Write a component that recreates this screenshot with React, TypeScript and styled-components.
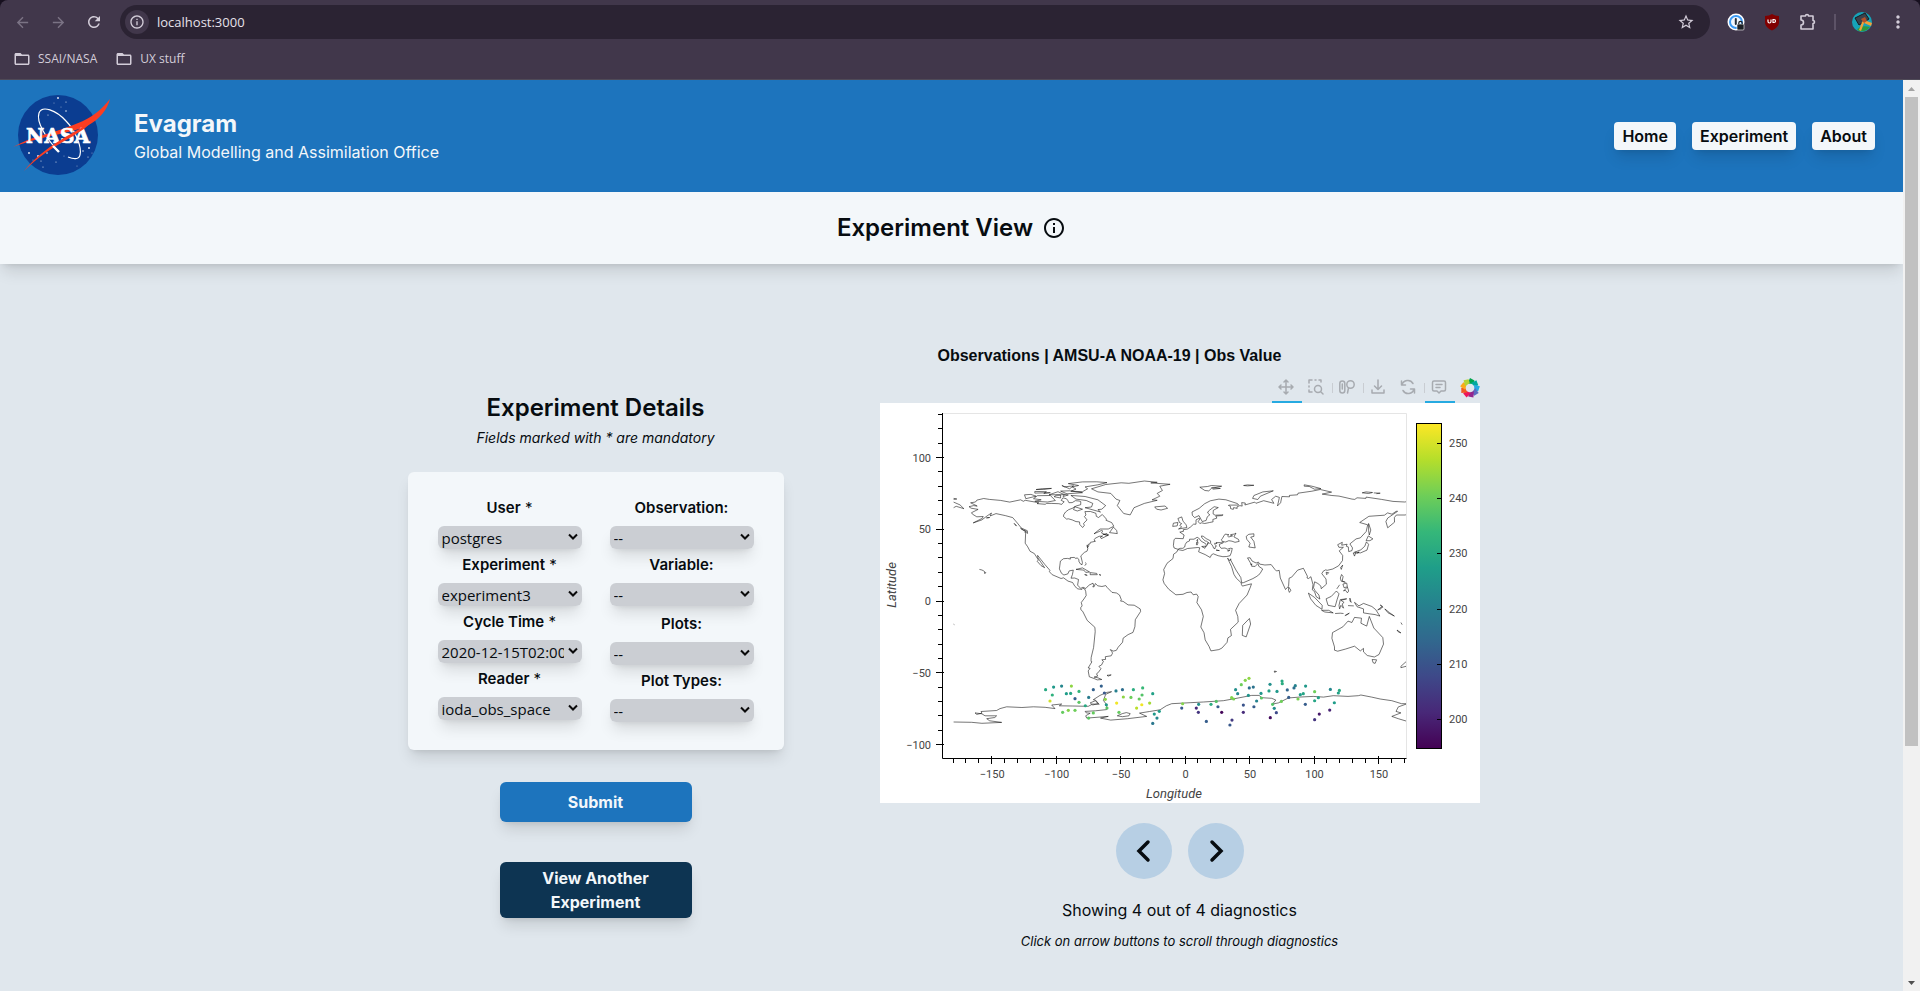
import React from "react";
import styled, { createGlobalStyle } from "styled-components";
import {
  MdArrowBack,
  MdArrowForward,
  MdRefresh,
  MdInfoOutline,
  MdStarBorder,
  MdFolderOpen,
  MdMoreVert,
} from "react-icons/md";

const color = {
  chrome: "#41374b",
  chromeDark: "#2b2333",
  chromeText: "#d3cdd9",
  blue: "#1d74bd",
  navy: "#0d3452",
  paper: "#f3f7fa",
  page: "#e0e7ed",
  ink: "#070c10",
  field: "#cbced3",
  pale: "#b7cfe4",
  toolIcon: "#a7abb0",
  toolActive: "#26aae1",
};

const uiFont = `"Open Sans", "Noto Sans", sans-serif`;
const shadow = "0 10px 15px -3px rgba(0,0,0,0.12), 0 4px 6px -4px rgba(0,0,0,0.12)";

const GlobalStyle = createGlobalStyle`
  *, *::before, *::after { box-sizing: border-box; }
  body {
    margin: 0;
    background: ${color.page};
    color: ${color.ink};
    font-family: Inter, "Liberation Sans", sans-serif;
    font-size: 16px;
    line-height: 24px;
  }
  h1, h2, p { margin: 0; }
  button { font: inherit; color: inherit; border: 0; padding: 0; background: none; cursor: pointer; }
`;

/* ---------- browser window ---------- */

const Window = styled.div`
  display: flex;
  flex-direction: column;
  height: 100vh;
  background: #17101f;
`;

const Chrome = styled.header`
  flex: none;
  background: ${color.chrome};
  border-bottom: 1px solid #4f4a57;
  border-radius: 8px 8px 0 0;
  font-family: ${uiFont};
  font-size: 12px;
  color: ${color.chromeText};
`;

const ChromeRow = styled.div`
  display: flex;
  align-items: center;
  height: 44px;
  padding: 0 12px;
  gap: 16px;
`;

const ChromeButton = styled.button<{ $dim?: boolean }>`
  display: flex;
  align-items: center;
  justify-content: center;
  width: 20px;
  height: 20px;
  color: ${(p) => (p.$dim ? "#7b7385" : color.chromeText)};
`;

const NavButtons = styled.div`
  display: flex;
  gap: 16px;
`;

const AddressBar = styled.div`
  flex: 1;
  display: flex;
  align-items: center;
  gap: 8px;
  height: 34px;
  padding: 0 14px 0 5px;
  border-radius: 17px;
  background: ${color.chromeDark};
`;

const SiteInfo = styled.button`
  display: flex;
  align-items: center;
  justify-content: center;
  width: 24px;
  height: 24px;
  border-radius: 12px;
  background: ${color.chrome};
  color: ${color.chromeText};
`;

const AddressInput = styled.input`
  flex: 1;
  border: 0;
  padding: 0;
  background: none;
  outline: none;
  color: #e6e1ea;
  font: 13px ${uiFont};
`;

const Extensions = styled.div`
  display: flex;
  align-items: center;
  gap: 16px;
`;

const Divider = styled.span`
  width: 2px;
  height: 16px;
  background: #5d5367;
`;

const Bookmarks = styled.nav`
  display: flex;
  align-items: center;
  gap: 18px;
  height: 35px;
  padding: 0 13px 5px;
`;

const Bookmark = styled.a`
  display: flex;
  align-items: center;
  gap: 7px;
  color: ${color.chromeText};
  text-decoration: none;
`;

const Viewport = styled.div`
  flex: 1;
  display: flex;
  min-height: 0;
  background: ${color.page};
`;

const Page = styled.div`
  flex: 1;
  min-width: 0;
  overflow: hidden;
`;

const ScrollTrack = styled.div`
  flex: none;
  display: flex;
  flex-direction: column;
  justify-content: space-between;
  align-items: center;
  width: 17px;
  background: #f1f1f1;
`;

const ScrollThumb = styled.div`
  flex: 0.74 1 0;
  width: 13px;
  background: #c1c1c1;
`;

const ScrollSpace = styled.div`
  flex: 0.26 1 0;
`;

/* ---------- site ---------- */

const SiteHeader = styled.header`
  display: flex;
  align-items: center;
  justify-content: space-between;
  height: 112px;
  padding: 0 28px 0 12px;
  background: ${color.blue};
`;

const Brand = styled.div`
  display: flex;
  align-items: center;
  gap: 22px;
  color: ${color.paper};
`;

const BrandName = styled.p`
  font-size: 24px;
  line-height: 32px;
  font-weight: 700;
`;

const SiteNav = styled.nav`
  display: flex;
  gap: 16px;
`;

const NavLink = styled.a`
  padding: 2px 8px;
  border-radius: 4px;
  background: ${color.paper};
  color: ${color.ink};
  font-weight: 600;
  text-decoration: none;
  box-shadow: ${shadow};
`;

const TitleBar = styled.div`
  display: flex;
  align-items: center;
  justify-content: center;
  gap: 9px;
  height: 72px;
  background: ${color.paper};
  box-shadow: ${shadow};
`;

const Heading = styled.h1`
  font-size: 24px;
  line-height: 32px;
  font-weight: 600;
`;

const Note = styled.p<{ $small?: boolean }>`
  font-size: ${(p) => (p.$small ? 13 : 14)}px;
  line-height: 20px;
  font-style: italic;
`;

const Main = styled.main`
  display: grid;
  grid-template-columns: 376px 616px;
  gap: 96px;
  justify-content: center;
  align-items: start;
  padding: 80px 16px 40px;
`;

const Details = styled.form`
  display: flex;
  flex-direction: column;
  align-items: center;
  padding-top: 48px;
  gap: 4px;
`;

const Card = styled.div`
  display: grid;
  grid-template-columns: 144px 144px;
  justify-content: center;
  column-gap: 28px;
  width: 100%;
  margin: 20px 0 28px;
  padding: 24px 16px 28px;
  border-radius: 6px;
  background: ${color.paper};
  box-shadow: ${shadow};
`;

const FieldColumn = styled.div`
  display: flex;
  flex-direction: column;
  gap: 4px;
`;

const FieldGroup = styled.div`
  display: flex;
  flex-direction: column;
  gap: 4px;
  & + & {
    margin-top: 2px;
  }
`;

const Field = styled.div`
  display: flex;
  flex-direction: column;
  gap: 6px;
`;

const Label = styled.label`
  text-align: center;
  font-size: 15px;
  font-weight: 600;
`;

const Mandatory = styled.span`
  font-weight: 400;
`;

const SelectShell = styled.div`
  position: relative;
  height: 23px;
  border-radius: 6px;
  box-shadow: ${shadow};
`;

const Select = styled.select`
  appearance: none;
  display: block;
  width: 100%;
  height: 23px;
  padding: 2px 18px 0 4px;
  border: 0;
  border-radius: 6px;
  background: ${color.field};
  color: ${color.ink};
  font: 15px/21px ${uiFont};
`;

const SelectArrow = styled.svg`
  position: absolute;
  right: 4px;
  top: 7px;
  pointer-events: none;
`;

const ActionButton = styled.button<{ $tone: string }>`
  width: 192px;
  min-height: 40px;
  padding: 4px 24px;
  border-radius: 6px;
  background: ${(p) => p.$tone};
  color: ${color.paper};
  font-weight: 700;
  box-shadow: ${shadow};
  & + & {
    margin-top: 36px;
  }
`;

const Diagnostics = styled.section`
  display: flex;
  flex-direction: column;
  align-items: center;
  padding-right: 16px;
`;

const PlotTitle = styled.h2`
  align-self: flex-start;
  padding-left: 58px;
  font: 700 16px/24px "Liberation Sans", Arial, sans-serif;
`;

const PlotTools = styled.div`
  align-self: flex-end;
  display: flex;
  align-items: center;
  height: 31px;
  margin-top: 4px;
`;

const ToolButton = styled.button<{ $active?: boolean }>`
  display: flex;
  align-items: center;
  justify-content: center;
  width: 30px;
  height: 31px;
  padding-right: 2px;
  border-bottom: 2px solid ${(p) => (p.$active ? color.toolActive : "transparent")};
`;

const ToolDivider = styled.span`
  width: 1px;
  height: 10px;
  background: #c9cdd2;
`;

const PlotLogo = styled.a`
  display: flex;
  margin-left: 5px;
`;

const ArrowRow = styled.div`
  display: flex;
  gap: 16px;
  margin: 20px 0 19px;
`;

const ArrowButton = styled.button`
  display: flex;
  align-items: center;
  justify-content: center;
  width: 56px;
  height: 56px;
  border-radius: 28px;
  background: ${color.pale};
`;

const Status = styled.p`
  margin-bottom: 9px;
`;

/* ---------- drawings ---------- */

const STARS = [
  [46, 6], [42, 11], [54, 10], [54, 19], [36, 23], [49, 15], [17, 61], [21, 68], [29, 69], [35, 61], [31, 75],
  [65, 74], [77, 56], [80, 61], [76, 65], [71, 59], [44, 70], [78, 49], [26, 64], [52, 64],
];

const NasaLogo = () => (
  <svg width="100" height="84" viewBox="0 2 100 84" role="img" aria-label="NASA">
    <circle cx="46" cy="43" r="40" fill="#0b3d91" />
    {STARS.map(([x, y], i) => (
      <circle key={i} cx={x} cy={y} r={i % 3 ? 0.6 : 1} fill="#fff" opacity={i % 2 ? 0.5 : 0.85} />
    ))}
    <path
      d="M46 59C34 46 24 30 27 21c3-8 17-3 27 8 10 10 16 27 14 34-1 5-7 4-12 2"
      fill="none"
      stroke="#fff"
      strokeWidth="1.2"
    />
    <path d="M1 55C12 49 22 45 31 43C48 38 60 34 71 29C83 23 90 17 98 7C95 18 88 27 75 34C60 41 30 44 1 55Z" fill="#fc3d21" />
    <text x="46" y="51" textAnchor="middle" fontFamily="DejaVu Serif, serif" fontWeight="700" fontSize="20" fill="#fff" stroke="#fff" strokeWidth="0.7">
      NASA
    </text>
    <path d="M12 79C25 63 40 53 55 44C68 37 76 32 84 24C78 34 68 40 56 47C40 56 27 64 12 79Z" fill="#fc3d21" />
    <path d="m41 54 6 6" stroke="#fff" strokeWidth="2.4" />
  </svg>
);

const PuzzleIcon = () => (
  <svg width="18" height="18" viewBox="0 0 18 18" fill="none" stroke="currentColor" strokeWidth="1.6" strokeLinejoin="round">
    <path d="M2 3h4.500a1.500 1.500 0 0 1 3 0H14v4.500a1.500 1.500 0 0 1 0 3V16H2v-4a2 2 0 0 0 0-5Z" />
  </svg>
);

const PasswordIcon = () => (
  <svg width="18" height="18" viewBox="0 0 18 18">
    <circle cx="9" cy="9" r="8.500" fill="#fff" />
    <circle cx="9" cy="9" r="6" fill="#f2f8ff" stroke="#3b9bf5" strokeWidth="2" />
    <rect x="7.8" y="5" width="2" height="7" rx="1" fill="#23303d" />
    <rect x="10" y="11" width="7" height="6" rx="1" fill="#1d2126" stroke="#fff" strokeWidth="0.6" />
    <path d="M11.8 11v-1a1.7 1.7 0 0 1 3.4 0v1" fill="none" stroke="#1d2126" strokeWidth="1.2" />
  </svg>
);

const ShieldIcon = () => (
  <svg width="18" height="18" viewBox="0 0 18 18">
    <path d="M9 1c2 1.3 4.3 2 7 2v6c0 4-3 6.500-7 8.500C5 15.500 2 13 2 9V3c2.700 0 5-.7 7-2Z" fill="#800000" />
    <path d="M5 6.500v2a1.500 1.500 0 0 0 3 0v-2M10 6.500v3h1a1.500 1.500 0 0 0 0-3Z" fill="none" stroke="#fff" strokeWidth="1.2" />
  </svg>
);

const Avatar = () => (
  <svg width="20" height="20" viewBox="0 0 20 20">
    <circle cx="10" cy="10" r="10" fill="#16a3b8" />
    <path d="M5 18c2-3 6-5 13-3a10 10 0 0 1-13 3Z" fill="#2f9a3c" />
    <path d="m3 6 10-5 4 6-10 6Z" fill="#3b424c" stroke="#151b22" />
    <path d="m12 8 8 3-1 3-7-3-3 8-2-1 3-8Z" fill="#f0a23a" />
    <path d="m9 7 4-2 2 4-3 2Z" fill="#b5532a" />
  </svg>
);

const ToolIcon = ({ children }: { children: React.ReactNode }) => (
  <svg width="16" height="16" viewBox="0 0 16 16" fill="none" stroke={color.toolIcon} strokeWidth="1.5" strokeLinecap="round" strokeLinejoin="round">
    {children}
  </svg>
);

const PETALS = ["#00a54f", "#00a99d", "#26aae1", "#5c6bc0", "#92278f", "#ed145b", "#f15a24", "#fba919", "#b5d334"];

const BokehLogo = () => (
  <svg width="20" height="20" viewBox="-10 -10 20 20">
    {PETALS.map((fill, i) => (
      <path key={fill} d="M-2.500 -4.500 0 -10 4.500 -7.500 3 -4Z" fill={fill} transform={`rotate(${i * 40})`} />
    ))}
  </svg>
);

/* Coastlines as longitude, latitude pairs. */
const COASTS = [
  "-168,65.7 -164.5,66.5 -161.7,66.1 -163.7,67.1 -166.8,68.4 -163,69 -161.9,70.3 -156.6,71.4 -152.2,70.8 -143.6,70.1 -136.5,68.9 -128,70.5 -125.8,69.5 -124.4,70.2 -117,69 -113.9,68.4 -115.3,67.9 -108.9,67.4 -107.8,68 -104.3,68 -98.4,67.8 -96.1,67.3 -95.5,68.1 -94.2,69.1 -96.5,70.1 -95.2,71.9 -92.4,71.2 -91.5,70.2 -90.5,68.5 -88,68.6 -85.5,69.9 -82.6,69.7 -81.3,69.2 -81.4,67.1 -84.7,66.3 -87,65.2 -87.3,64.8 -90.8,63.6 -93.2,62 -94.6,60.1 -94.7,58.9 -92.3,57.1 -90.9,57.3 -88,56.5 -85,55.3 -82.3,55.1 -82.1,53.3 -79.9,51.2 -78.6,52.6 -79.1,54.1 -76.5,56.5 -78.5,58.8 -77.3,59.9 -78.1,62.3 -73.8,62.4 -69.6,61.1 -69.3,59 -67.6,58.2 -64.6,60.3 -61.4,57 -61.8,56.3 -57.3,54.6 -55.7,52.1 -60,50.2 -66.4,50.2 -71.1,46.8 -65.1,49.2 -64.2,48.7 -65.1,48.1 -64.8,47 -61.1,45.7 -59.8,45.9 -65.4,43.5 -66.1,44.6 -64.4,45.3 -67.1,45.1 -70.1,43.7 -70.8,42.9 -70.5,41.8 -70,41.6 -73.7,40.9 -74,40.7 -74.2,39.7 -75.5,39.5 -75.1,38.4 -76,37.2 -76.3,39.1 -76.3,37.9 -75.9,36.5 -76.4,34.8 -78.5,33.9 -81.3,31.4 -80.1,26.9 -80.4,25.2 -81.7,25.9 -82.9,27.9 -82.6,28.6 -84,30.1 -85.1,29.6 -86.4,30.4 -89.6,30.2 -89.4,29.2 -91.6,29.7 -94.7,29.5 -97.1,27.8 -97.5,25 -97.9,22.4 -96.3,19.3 -94.4,18.1 -91.4,18.9 -90.3,21 -87.1,21.5 -87.8,18.3 -88.9,15.9 -86,16 -83.1,15 -83.8,11.1 -81.4,8.8 -79.6,9.6 -77.4,8.7 -75.5,10.6 -74.9,11.1 -71.8,12.4 -71.4,11 -72,9.8 -71,9.9 -70,12.2 -68.2,10.6 -64.9,10.1 -61.9,10.7 -60.8,9.4 -57.1,6 -53.6,5.6 -51.3,4.2 -49.9,1 -50.4,-0.1 -48.6,-0.2 -44.6,-2.7 -39.9,-2.9 -35.2,-5.5 -34.9,-7.3 -39,-13 -39.3,-17.9 -40.8,-21.9 -44.6,-23.4 -48.5,-25.9 -48.9,-28.7 -52.3,-32.2 -53.8,-34.4 -56.2,-34.9 -58.4,-33.9 -57.2,-35.3 -56.7,-36.4 -57.7,-38.2 -62.3,-38.8 -62.1,-40.7 -65,-41 -63.8,-42 -65.2,-44.5 -67.3,-45.6 -65.6,-47.2 -67.8,-49.9 -69.1,-50.7 -68.2,-52.3 -71,-53 -68,-53.5 -65,-54.7 -68.6,-55 -71,-54 -74.7,-52.8 -75.6,-48.7 -74.1,-46.9 -75.6,-46.6 -72.7,-42.4 -73.4,-42.1 -73.2,-39.3 -71.4,-32.4 -70.1,-21.4 -70.4,-18.3 -76.3,-13.5 -79.8,-7.2 -81.2,-6.1 -81.4,-4.7 -80.3,-3.4 -80.9,-1 -78.9,1.4 -77.1,3.8 -77.5,6.7 -78.2,8.3 -79.6,8.9 -80.4,8.1 -83.6,8.4 -85.8,10.1 -87.7,12.9 -91.2,13.9 -94.7,16.2 -96.6,15.7 -103.5,18.3 -105.7,20.4 -105.3,21.4 -109.3,25.6 -112.3,29 -114.8,31.8 -114.7,30.2 -109.4,23.2 -112.2,24.7 -115.1,27.7 -114.2,28.6 -117.3,33 -120.6,34.6 -122.5,37.8 -124.4,40.3 -124.1,46.9 -124.7,48.2 -122.6,47.1 -122.8,49 -127.4,50.8 -130.5,54.3 -134.1,58.1 -139.9,59.5 -147.1,60.9 -151.7,59.2 -150.6,61.3 -154,59.3 -158,56.5 -164.8,54.4 -157.7,57.6 -157,58.9 -162,58.7 -165.3,60.5 -166.1,61.5 -161,63.8 -166.4,64.7 -168,65.7",
  "32,31 34.5,31.6 35.5,33.9 36,35.8 36.2,36.6 34.7,36.8 32.5,36.1 30.6,36.9 27.6,36.7 26.3,38.2 26.2,39.5 29.2,40.5 29,41.3 31.1,41.1 33.5,42 36,41.7 38.3,40.9 41.6,41.5 41,43 37.5,44.7 39.1,47.3 37.7,46.6 35,46.3 34.9,45.7 36.5,45.4 35.2,45.1 33.5,44.6 32.5,45.4 33.6,46.2 30.7,46.6 29.6,45.3 28.6,43.7 27.7,42.6 29,41.3 27.2,40.7 23.7,40.7 24.4,40.1 22.6,40.3 22.8,39.3 24,38.2 23.1,37.9 22.8,36.4 21.7,36.8 21.1,38.3 19.4,40.3 19.4,41.9 16,43.5 13.7,45.1 12.3,45.4 12.6,44.1 15.1,41.9 16.2,41.7 18.5,40.2 16.9,40.4 17.1,39 15.7,37.9 16.1,39 15.4,40 12.1,41.7 10.2,43.9 8.9,44.4 6.5,43.1 3.1,43.1 3,41.9 0.8,41 -0.3,39.3 -0.7,37.6 -2.1,36.7 -4.4,36.7 -5.9,36 -8.9,36.9 -9.5,38.7 -9,42.6 -8,43.7 -1.9,43.4 -1.2,46 -4.5,48 -1.6,48.6 -1.9,49.7 1.3,50.1 3.8,51.6 6.1,53.5 8.1,53.5 8.1,56.5 10.6,57.7 10.9,56.5 9.6,55.5 11,54 12.5,54.5 14.8,54 18.6,54.7 21.3,55.2 21.1,56.8 24.3,57.8 23.4,59.2 28,59.5 29.1,60 22.9,59.8 21.3,60.7 21.5,63.2 25.4,65.1 22.2,65.7 17.8,62.7 17.1,61.3 18.8,60.1 16.8,58.7 15.9,56.1 12.9,55.4 10.4,59.5 7,58.1 5.3,59.7 5,62 10.5,64.5 14.8,67.8 19.2,69.8 25.8,71 31.3,70.5 40.3,67.9 41.1,66.8 33.9,66.8 33.2,66.6 34.8,65.9 34.9,64.4 37,63.8 37.2,65.1 40,64.5 39.8,65.6 42.1,66.5 43.9,66.1 43.5,68.6 46.3,68.3 46,66.9 53.7,68.9 54.5,68.1 60.6,69.9 68.5,68.1 66.7,70.7 69.9,73 72.8,72.2 71.3,66.3 73.7,68.4 74.7,72.8 80.6,72.6 80.5,73.6 86.8,74 87.2,75.1 98,76.5 104.4,77.7 113.3,75.9 106,74.5 113.5,73.5 119,73.1 129.1,71 131.3,70.8 133,71.9 139.9,71.5 140,72.4 152,70.8 160.9,69.4 170,69 176,69.9 180,69",
  "180,65 177.4,64.6 179.4,62.7 170.3,59.9 163.5,59.9 162,58.2 162.1,54.9 156.8,51 155.4,55.4 156.8,57.8 164.5,62.5 163.3,62.5 160.1,60.5 156.7,61.4 154.2,59.8 142.2,59 135.1,54.7 141.3,53.1 140.1,48.4 135.5,44 132.3,43.3 127.5,39.8 129.5,37 129.1,35.1 126.5,34.4 126.2,37.7 124.7,38.1 125.3,39.6 121.1,38.9 121.6,40.9 118,39.2 118.9,37.4 122.4,37.4 119.2,34.9 121.9,31.7 121.7,28.2 118.7,24.5 114.2,22.3 109.9,21.4 108.5,21.7 106.7,20.7 105.7,19 108.9,15.3 109.2,11.7 105.2,8.6 105,10.4 102.6,12.2 100.1,13.4 99.2,9.2 100.5,7.2 103.4,4.2 104.2,1.3 101.3,3 100.1,6.5 98.3,7.8 98.8,11.4 97.2,16.9 95.4,15.7 94.2,16 94.5,17.3 91.4,22.8 87,21.5 82.2,16.6 80.3,15.9 79.9,10.4 77.5,8 73.5,16 72.6,21.4 70.5,20.9 69.2,22.1 66.4,25.4 61.5,25.1 57.4,25.7 56.5,27.1 54.7,26.5 51.5,27.9 50.1,30.1 48,30 50.2,26.7 50.8,25 51.3,26 51.3,24.2 54,24.1 56.1,26.1 56.8,24.2 59.8,22.3 57.7,19 55.3,17.2 52.2,15.6 45,12.8 43.5,12.6 42.8,16.4 39.1,21.5 35.2,28.1 35,29.4 34.4,28 32.6,29.9 33.6,27.8 35.7,23.9 37.5,18.6 39.3,15.9 43.1,12.7 43.3,11.5 44.1,10.4 51.1,12 50.3,9.7 47.7,4.2 41.6,-1.7 38.8,-6.5 40.5,-10.8 40.8,-14.7 34.8,-19.8 35.5,-24.1 32.8,-25.7 32.2,-28.8 28.2,-32.8 25.8,-33.9 19.6,-34.8 18.2,-31.7 15.2,-27.1 14.3,-22.1 11.8,-18.1 13.7,-10.7 12.3,-6.1 8.8,-1.1 9.8,3.1 8.5,4.8 5.9,4.3 4.3,6.3 1.1,5.9 -2,4.7 -7.5,4.3 -13.1,8.2 -16.6,12.2 -17.6,14.7 -16.3,19.1 -17,21.9 -14.4,26.3 -9.8,29.6 -9.3,32.6 -6.9,34.1 -5.9,35.8 -2.2,35.2 1.5,36.6 9.5,37.3 11,37.1 10.1,34.3 15.2,32.3 19.1,30.3 20.1,32.2 21.5,32.9 25.2,31.6 28.9,30.9 32,31",
  "-180,-84.3 -166,-84.5 -158,-85.2 -142.7,-84.6 -152,-83.5 -154.3,-82 -148,-81.2 -146.6,-80 -155.6,-80 -158,-78.6 -163.4,-78 -162,-79 -158,-78.2 -158.7,-77 -146.6,-76.3 -144,-75 -138.8,-73.7 -127,-74.2 -118,-73.7 -109,-74.1 -101.3,-75 -103.9,-72.5 -96.1,-71.8 -98,-73 -88,-73.2 -75.5,-73.4 -72.1,-71.8 -67,-72 -70,-69 -71.6,-68.8 -66.4,-65.8 -61.2,-63.7 -57.4,-63.2 -62,-65 -63.8,-69.3 -61.2,-72.3 -61.2,-75.7 -70,-76.5 -78,-76.9 -77,-78 -74,-78.2 -77.5,-80 -76.7,-81.6 -60,-80.4 -66,-81.6 -58.1,-83 -45,-82 -30.2,-80.4 -35.8,-78.1 -28,-77 -19.8,-75.8 -15,-73 -10.8,-71.6 3.5,-70.9 13.8,-70.4 29.3,-69.5 38.3,-68 51.3,-65.8 57,-65.8 59,-67.4 66.8,-67.8 70,-69 67.5,-71.8 72,-71 79.7,-67.6 88,-67 99,-66.5 107,-67 114.6,-66 126,-66.5 134,-66 136,-65.5 144.4,-67 151,-68.3 160,-69.5 167.6,-71.6 172,-71.6 165,-73.8 163.2,-76.9 167,-78 160,-80.4 165,-82 172,-83.9",
  "-53,-80 -49,-78.5 -46,-77.8 -43,-78.5 -44,-80 -49,-80.6 -53,-80",
  "-74,-71 -70,-69.5 -68,-71.5 -72,-72.5 -74,-71",
  "-73,78.2 -68,79.5 -62,81.2 -50,82.4 -44,82 -32,83.6 -22,82.7 -27,82.3 -12,81.3 -20,80 -18,77 -22,75 -20,73 -26,70.5 -22,70.2 -32,68 -40,65 -43,60 -48,61 -53,66.5 -51,70 -54,71 -58,75 -68,76 -73,78.2",
  "-69,83.1 -61,82.5 -68,81 -78,79.5 -76,78.2 -80,76.2 -89,76.5 -85,78 -88,79.5 -83,80.5 -91,81.8 -80,83 -69,83.1",
  "-62,66.5 -68,70.5 -78,72.8 -89,73.6 -85,71 -77,70 -72,68 -73,65.5 -78,65 -66,62 -68,63.7 -65,64 -62,66.5",
  "-115,73.4 -105,73.5 -101,70 -107,69 -117,69.5 -112,70.5 -118,71.3 -115,73.4",
  "-125,74 -120,74.3 -116,73 -124,71.3 -125,74",
  "-100,73.7 -97,73.7 -97,71.8 -102,72.7 -100,73.7",
  "-108,76.2 -110,75 -105,75.5 -117,75.2 -117,76.4 -108,76.2",
  "-90,76.8 -80,75.5 -92,74.7 -97,76.6 -90,76.8",
  "-94,79.5 -87,80.3 -90,78.2 -96,80.5 -94,79.5",
  "-86,65.7 -80,64 -84,62.7 -87,63.7 -86,65.7",
  "-116,77.7 -111,78.3 -104,78.5 -110,77.7 -116,77.7",
  "-95,74.5 -91,73.9 -95,72.8 -94,74.1 -106,74 -99,76.2 -95,74.5",
  "-24,65.6 -22.5,64 -19,63.4 -14,64.6 -16,66.2 -24,65.6",
  "-5.5,50.2 1,51.2 0.5,53 -2,55.7 -3,58.6 -6,57.5 -4.7,54.7 -3,53.9 -4.5,52.8 -3,51.5 -5.5,50.2",
  "-10,52 -6.5,52.3 -6,54.7 -9.5,54.2 -10,52",
  "-59,47.7 -53,47 -53.5,49.2 -56,51.5 -59,47.7",
  "-64,46.5 -61,47 -60,46 -64,46.5",
  "-85,22 -80,23.1 -74.5,20.2 -77.5,19.9 -79,21.5 -85,22",
  "-74,19.8 -69,19.2 -68.5,18.3 -74,18.3 -74,19.8",
  "-78.3,18.4 -76.3,17.9 -78.3,18.4",
  "-67,18.4 -65.7,18 -67,18.4",
  "-78,26.8 -77,26 -78.2,24.6",
  "-128,50.6 -123.5,48.4 -125.5,49 -128,50.6",
  "-133,54.1 -131.2,52.2 -133,54.1",
  "-154.5,57.9 -152,58.2 -154.5,57.9",
  "-160,22 -158,21.6 -157,21.2 -155,19.7 -155.8,19 -156,20.2",
  "-61,-51.8 -57.7,-51.5 -60,-52.3 -61,-51.8",
  "-180,68.9 -175,67 -172,64.3 -178,66 -180,65",
  "-180,71.5 -177.5,71.1 -180,70.8",
  "11,79.3 15,77 18,76.7 20,78.5 28,80 20,80.5 17,79.8 11,79.3",
  "20,79 27,78.5 21,77.9",
  "45,80.5 48,80.9 53,80.6 48,80.2 45,80.5",
  "52,71.5 56,70.7 58,73 68,76.8 60,76 53,73.5 52,71.5",
  "92,81 98,80 105,78.3 100,77.9 96,79.8 92,80 92,81",
  "137,75.4 140,76 145,75.6 142,74.9 137,75.4",
  "146,75.3 151,75.1 148,74.8",
  "49,46.5 53,46.8 53,45 50.5,44.5 53,41.5 54,37 49,37.6 50,40.2 47.5,43 47,45 49,46.5",
  "49.5,-12.2 50.4,-16 47,-25 44,-24 44.3,-17 49.5,-12.2",
  "80,9.7 81.7,7.5 80.5,6 79.8,7.5 80,9.7",
  "95.3,5.5 100,2.5 106,-3 105.8,-5.8 101,-3 97,1.5 95.3,5.5",
  "105.5,-6.5 111,-6.5 114.5,-8.3 108,-7.7 105.5,-6.5",
  "117,7 119,5 117.5,1 116,-4 110.5,-3 109,1.5 113,3.2 117,7",
  "120,1 125,1.5 120.5,0.5 123,-1 121.5,-2 122.5,-5 120.5,-3 119.5,-5.5 119,-3 120,1",
  "131,-1 134.5,-3.4 138,-1.7 144.5,-3.8 147.5,-6 150.7,-10.5 147,-9.5 143,-9 138,-8.3 138,-5.5 133,-4 131,-1",
  "152,-4.2 149,-6.2 151.5,-5.5 152,-4.2",
  "151,-2.8 153,-4.5 152.5,-3.5 151,-2.8",
  "154.5,-5.5 158,-8 162,-10.5 157,-8.2 154.5,-5.5",
  "164,-20.2 167,-22.2 165,-21.5 164,-20.2",
  "167,-15 168,-16.5",
  "124,-10.2 127,-8.5 123.5,-10.2",
  "116,-8.7 120,-8.5 122.5,-8.7",
  "127.5,2 128.5,-1 127.5,0 127.5,2",
  "126,-3.2 130.5,-3.4",
  "121,18.5 122.2,17 121.5,14 124,13 120.7,13.8 120,16 121,18.5",
  "122,11.8 125,12.5 125.5,10 123,9.2 122,11.8",
  "122.5,7 125.5,9.7 126.5,7 125.5,5.7 124,7.5 122.5,7",
  "117.3,8.4 119.5,11.3",
  "109,20 111,19.7 109.5,18.3 109,20",
  "120.2,23.3 121.9,25 120.8,22 120.2,23.3",
  "130,33.5 131,31.3 132,33.5 130,33.5",
  "131,34 136,35.7 139,38.2 140.3,41.2 142,39.5 140.7,35.5 135.7,33.5 131,34",
  "132.5,33 134.5,34.3 133.5,33",
  "140,42 141.7,45.4 145.3,43.3 143,42 140,42",
  "142,54 143.7,49.5 142.5,46 142,49 142,54",
  "114,-22 113.5,-26 115.5,-32 115.5,-34.3 118,-35 124,-33.5 131,-31.5 135.5,-34.8 138,-33 138,-35.5 141,-38 146.5,-39 150,-37.3 153.5,-30 153,-25.5 146,-18.8 142.5,-10.7 140.5,-17.5 136,-15.5 136.5,-12 131,-11.4 129,-15 126,-14 122,-18 114,-22",
  "144.7,-40.8 148.2,-41 147,-43.5 145.5,-43 144.7,-40.8",
  "173,-40.7 167,-45.5 167,-46.5 171,-45.5 174,-41.5",
  "8.5,41 9.7,40.8 9,39 8.4,39.2 8.5,41",
  "9.3,43 9.3,41.4 8.7,42.3 9.3,43",
  "12.5,38 15.5,38.2 15,36.7 12.5,38",
  "23.7,35.5 26.2,35.1 23.7,35.5",
  "32.5,35 34.5,35.6 33,34.6 32.5,35",
  "68.8,-48.8 70.5,-49.1 69,-49.7 68.8,-48.8",
  "-180,-16.2 -179.4,-16.5",
];

/* Longitude, latitude and observed value. */
const OBSERVATIONS: [number, number, number][] = [
  [-108.6, -61.8, 230], [-102.4, -60, 226], [-96.2, -59.3, 222], [-88.6, -59.3, 243], [-103.4, -65.5, 232],
  [-92.5, -64.6, 227], [-89.2, -64.4, 229], [-82.7, -63, 233], [-105.2, -69.7, 249], [-85.8, -68.1, 213],
  [-75.2, -67.2, 219], [-71.6, -61.8, 213], [-65.4, -59.3, 213], [-63, -64.1, 211], [-82.7, -70.6, 238],
  [-77.8, -73, 230], [-95.4, -77.6, 239], [-91, -76.2, 242], [-85.8, -76.2, 240], [-75.2, -81.6, 238],
  [-71.6, -78, 239], [-62.3, -68.5, 243], [-61.5, -72.3, 226], [-61, -74.6, 238], [-54, -62.7, 220],
  [-49, -61.8, 216], [-40.5, -61.8, 231], [-33.3, -60.6, 234], [-25.5, -64.6, 228], [-53.5, -71.1, 252],
  [-48.3, -66.9, 243], [-42.4, -67.2, 240], [-36, -68.3, 239], [-33.8, -65.5, 237], [-34, -72.3, 252],
  [-38, -74.6, 247], [-27.9, -71.1, 245], [-51.7, -77.6, 239], [-24.3, -78.8, 226], [-20.4, -76.9, 227],
  [-22.2, -81.6, 222], [-25.5, -85.3, 218], [-2.3, -71.6, 242], [-3, -74.6, 211], [8.3, -74.6, 202],
  [10.1, -72, 224], [9.9, -77.6, 204], [16.1, -83.9, 212], [19.7, -72, 231], [23.8, -70, 237],
  [25.1, -73.7, 212], [28, -77.6, 196], [36, -83, 205], [34.4, -86.4, 211], [35.7, -67.4, 242],
  [37.3, -68.3, 241], [38.8, -61.8, 224], [40.4, -64.6, 222], [43.2, -58.3, 240], [46.3, -55.3, 242],
  [49.2, -53.9, 243], [49.4, -60.6, 216], [52.5, -60, 217], [48.7, -65.8, 225], [44.8, -72.5, 210],
  [44.8, -77.6, 202], [53, -73.7, 212], [55.1, -69.7, 221], [58.5, -64.4, 225], [58.8, -67.6, 238],
  [64.7, -62.7, 228], [65.5, -58.1, 224], [70.9, -63, 226], [74.8, -55.8, 230], [75, -57.6, 231],
  [67.5, -72, 237], [68.8, -74.8, 223], [70.4, -77.8, 208], [65.7, -81.3, 197], [74.3, -70, 240],
  [78.9, -62, 214], [80, -67.2, 212], [84.1, -60.6, 216], [85.1, -59, 221], [93.1, -59.3, 226],
  [87.2, -68.3, 241], [89, -65.3, 227], [91.3, -64.6, 229], [92.9, -72, 212], [100.1, -63.2, 240],
  [100.1, -69.5, 229], [103, -67.4, 228], [103.7, -78.8, 199], [100.1, -82.7, 204], [111.8, -76, 201],
  [112.3, -61.6, 222], [119.3, -62.3, 230], [118.5, -64.1, 228], [115.4, -70.9, 227],
];

const VIRIDIS = ["#440154", "#482878", "#3e4989", "#31688e", "#26828e", "#1f9e89", "#35b779", "#6ece58", "#b5de2b", "#fde725"];
const shade = (v: number) => {
  const t = Math.max(0, Math.min(1, (v - 195) / 58)) * (VIRIDIS.length - 1);
  const i = Math.min(Math.floor(t), VIRIDIS.length - 2);
  return `color-mix(in srgb, ${VIRIDIS[i]}, ${VIRIDIS[i + 1]} ${Math.round((t - i) * 100)}%)`;
};

const lonX = (lon: number) => 305.6 + lon * 1.289;
const latY = (lat: number) => 198 - lat * 1.435;
const steps = (from: number, to: number) => Array.from({ length: (to - from) / 10 + 1 }, (_, i) => from + i * 10);
const minus = (n: number) => String(n).replace("-", "\u2212");

const PlotSvg = styled.svg`
  display: block;
  width: 600px;
  height: 400px;
  background: #fff;
  font: 11px Roboto, "Liberation Sans", sans-serif;
  text {
    fill: #444;
  }
`;

const AxisName = styled.text`
  font: italic 13px Roboto, "Liberation Sans", sans-serif;
`;

const WorldPlot = () => (
  <PlotSvg viewBox="0 0 600 400" role="img" aria-label="World map of observed values">
    <defs>
      <clipPath id="frame">
        <rect x="62" y="10" width="464" height="345" />
      </clipPath>
      <linearGradient id="viridis" x1="0" y1="1" x2="0" y2="0">
        {VIRIDIS.map((c, i) => (
          <stop key={c} offset={i / (VIRIDIS.length - 1)} stopColor={c} />
        ))}
      </linearGradient>
    </defs>
    <path d="M62 10.5H526.5V355" fill="none" stroke="#e5e5e5" />
    <g clipPath="url(#frame)">
      {COASTS.map((line, i) => (
        <polyline
          key={i}
          points={line.split(" ").map((p) => {
            const [lon, lat] = p.split(",").map(Number);
            return `${lonX(lon).toFixed(1)},${latY(lat).toFixed(1)}`;
          }).join(" ")}
          fill="none"
          stroke="#000"
          strokeOpacity="0.6"
          strokeWidth="0.9"
          strokeLinejoin="round"
        />
      ))}
      {OBSERVATIONS.map(([lon, lat, v], i) => (
        <circle key={i} cx={lonX(lon)} cy={latY(lat)} r="1.6" fill={shade(v)} />
      ))}
    </g>
    <g stroke="#000">
      <path d="M62.5 10V355.5H526.5" fill="none" />
      {steps(-100, 130).map((lat) => {
        const y = Math.floor(latY(lat)) + 0.5;
        return <path key={lat} d={lat % 50 ? `M58 ${y}H62` : `M56 ${y}H64`} />;
      })}
      {steps(-180, 170).map((lon) => {
        const x = Math.round(lonX(lon)) - 0.5;
        return <path key={lon} d={lon % 50 ? `M${x} 356V360` : `M${x} 353V361`} />;
      })}
    </g>
    {[-100, -50, 0, 50, 100].map((lat) => (
      <text key={lat} x="51" y={latY(lat) + 4} textAnchor="end">{minus(lat)}</text>
    ))}
    {[-150, -100, -50, 0, 50, 100, 150].map((lon) => (
      <text key={lon} x={lonX(lon)} y="375" textAnchor="middle">{minus(lon)}</text>
    ))}
    <AxisName x="294" y="395" textAnchor="middle">Longitude</AxisName>
    <AxisName transform="translate(16 182) rotate(-90)" textAnchor="middle">Latitude</AxisName>
    <rect x="536.5" y="20.5" width="25" height="325" fill="url(#viridis)" stroke="#000" />
    {[250, 240, 230, 220, 210, 200].map((v, i) => (
      <g key={v}>
        <path d={`M557 ${Math.round(40 + i * 55.2) + 0.5}h5`} stroke="#000" />
        <text x="569" y={44 + i * 55.2}>{v}</text>
      </g>
    ))}
  </PlotSvg>
);

/* ---------- form ---------- */

type FieldSpec = { id: string; label: string; value: string; mandatory?: boolean };

const SelectField = ({ id, label, value, mandatory }: FieldSpec) => (
  <Field>
    <Label htmlFor={id}>
      {label}
      {mandatory && <Mandatory> *</Mandatory>}
    </Label>
    <SelectShell>
      <Select id={id} defaultValue={value}>
        <option>{value}</option>
      </Select>
      <SelectArrow width="10" height="8" viewBox="0 0 10 8" fill="none" stroke="#0a0a0a" strokeWidth="2">
        <path d="m1 1.5 4 4 4-4" />
      </SelectArrow>
    </SelectShell>
  </Field>
);

const REQUIRED: FieldSpec[] = [
  { id: "user", label: "User", value: "postgres", mandatory: true },
  { id: "experiment", label: "Experiment", value: "experiment3", mandatory: true },
  { id: "cycle", label: "Cycle Time", value: "2020-12-15T02:00:00", mandatory: true },
  { id: "reader", label: "Reader", value: "ioda_obs_space", mandatory: true },
];
const DATA_FILTERS: FieldSpec[] = [
  { id: "observation", label: "Observation:", value: "--" },
  { id: "variable", label: "Variable:", value: "--" },
];
const PLOT_FILTERS: FieldSpec[] = [
  { id: "plots", label: "Plots:", value: "--" },
  { id: "plot-types", label: "Plot Types:", value: "--" },
];

const renderFields = (fields: FieldSpec[]) => fields.map((f) => <SelectField key={f.id} {...f} />);

const BrowserChrome = () => (
  <Chrome>
    <ChromeRow>
      <NavButtons>
        <ChromeButton $dim aria-label="Back"><MdArrowBack size={17} /></ChromeButton>
        <ChromeButton $dim aria-label="Forward"><MdArrowForward size={17} /></ChromeButton>
        <ChromeButton aria-label="Reload"><MdRefresh size={18} /></ChromeButton>
      </NavButtons>
      <AddressBar>
        <SiteInfo aria-label="Site information"><MdInfoOutline size={16} /></SiteInfo>
        <AddressInput aria-label="Address" defaultValue="localhost:3000" />
        <ChromeButton aria-label="Bookmark this page"><MdStarBorder size={18} /></ChromeButton>
      </AddressBar>
      <Extensions>
        <ChromeButton aria-label="Password manager"><PasswordIcon /></ChromeButton>
        <ChromeButton aria-label="Content blocker"><ShieldIcon /></ChromeButton>
        <ChromeButton aria-label="Extensions"><PuzzleIcon /></ChromeButton>
        <Divider />
        <ChromeButton aria-label="Profile"><Avatar /></ChromeButton>
        <ChromeButton aria-label="Menu"><MdMoreVert size={20} /></ChromeButton>
      </Extensions>
    </ChromeRow>
    <Bookmarks>
      <Bookmark href="#"><MdFolderOpen size={18} />SSAI/NASA</Bookmark>
      <Bookmark href="#"><MdFolderOpen size={18} />UX stuff</Bookmark>
    </Bookmarks>
  </Chrome>
);

const PlotToolbar = () => (
  <PlotTools>
    <ToolButton type="button" $active aria-label="Pan">
      <ToolIcon><path d="M8 1v14M1 8h14M6 3l2-2 2 2M6 13l2 2 2-2M3 6 1 8l2 2M13 6l2 2-2 2" /></ToolIcon>
    </ToolButton>
    <ToolButton type="button" aria-label="Box zoom">
      <ToolIcon>
        <path d="M1 4V1h3M7 1h1M11 1h2v2M1 7v1M1 11v2h3" />
        <circle cx="10" cy="10" r="3.5" />
        <path d="m13 13 2 2" />
      </ToolIcon>
    </ToolButton>
    <ToolDivider />
    <ToolButton type="button" aria-label="Wheel zoom">
      <ToolIcon>
        <rect x="0.8" y="2" width="5" height="12" rx="2.5" />
        <path d="M3.3 5v5M8.5 14l1-5" />
        <circle cx="11.500" cy="5.500" r="3.700" />
      </ToolIcon>
    </ToolButton>
    <ToolDivider />
    <ToolButton type="button" aria-label="Save">
      <ToolIcon><path d="M8 1v9M4.500 7 8 10.500 11.500 7M2 11v3h12v-3" /></ToolIcon>
    </ToolButton>
    <ToolButton type="button" aria-label="Reset">
      <ToolIcon><path d="M1.500 2v4h4M2 6a6 6 0 0 1 11-1.500M14.500 14v-4h-4M14 10a6 6 0 0 1-11 1.500" /></ToolIcon>
    </ToolButton>
    <ToolDivider />
    <ToolButton type="button" $active aria-label="Hover">
      <ToolIcon><path d="M3 2h10a1.500 1.500 0 0 1 1.500 1.500v7A1.500 1.500 0 0 1 13 12h-3l-2 2-2-2H3a1.500 1.500 0 0 1-1.500-1.500v-7A1.500 1.500 0 0 1 3 2ZM5 5.500h6M5 8.500h4" /></ToolIcon>
    </ToolButton>
    <PlotLogo href="#" aria-label="Bokeh"><BokehLogo /></PlotLogo>
  </PlotTools>
);

const Chevron = ({ d }: { d: string }) => (
  <svg width="24" height="24" viewBox="0 0 24 24" fill="none" stroke={color.ink} strokeWidth="3.5" strokeLinecap="round">
    <path d={d} />
  </svg>
);

export default function App() {
  return (
    <Window>
      <GlobalStyle />
      <BrowserChrome />
      <Viewport>
        <Page>
          <SiteHeader>
            <Brand>
              <NasaLogo />
              <div>
                <BrandName>Evagram</BrandName>
                <p>Global Modelling and Assimilation Office</p>
              </div>
            </Brand>
            <SiteNav>
              <NavLink href="#">Home</NavLink>
              <NavLink href="#">Experiment</NavLink>
              <NavLink href="#">About</NavLink>
            </SiteNav>
          </SiteHeader>
          <TitleBar>
            <Heading>Experiment View</Heading>
            <MdInfoOutline size={24} />
          </TitleBar>
          <Main>
            <Details onSubmit={(e) => e.preventDefault()}>
              <Heading as="h2">Experiment Details</Heading>
              <Note>Fields marked with * are mandatory</Note>
              <Card>
                <FieldColumn>{renderFields(REQUIRED)}</FieldColumn>
                <FieldColumn>
                  <FieldGroup>{renderFields(DATA_FILTERS)}</FieldGroup>
                  <FieldGroup>{renderFields(PLOT_FILTERS)}</FieldGroup>
                </FieldColumn>
              </Card>
              <ActionButton type="submit" $tone={color.blue}>Submit</ActionButton>
              <ActionButton type="button" $tone={color.navy}>View Another Experiment</ActionButton>
            </Details>
            <Diagnostics>
              <PlotTitle>Observations | AMSU-A NOAA-19 | Obs Value</PlotTitle>
              <PlotToolbar />
              <WorldPlot />
              <ArrowRow>
                <ArrowButton aria-label="Previous diagnostic"><Chevron d="m16 3-9 9 9 9" /></ArrowButton>
                <ArrowButton aria-label="Next diagnostic"><Chevron d="m8 3 9 9-9 9" /></ArrowButton>
              </ArrowRow>
              <Status>Showing 4 out of 4 diagnostics</Status>
              <Note $small>Click on arrow buttons to scroll through diagnostics</Note>
            </Diagnostics>
          </Main>
        </Page>
        <ScrollTrack aria-hidden="true">
          <svg width="17" height="17" viewBox="0 0 17 17"><path d="M5 11h7L8.500 7Z" fill="#a3a3a3" /></svg>
          <ScrollThumb />
          <ScrollSpace />
          <svg width="17" height="17" viewBox="0 0 17 17"><path d="M5 7h7l-3.500 4Z" fill="#505050" /></svg>
        </ScrollTrack>
      </Viewport>
    </Window>
  );
}
